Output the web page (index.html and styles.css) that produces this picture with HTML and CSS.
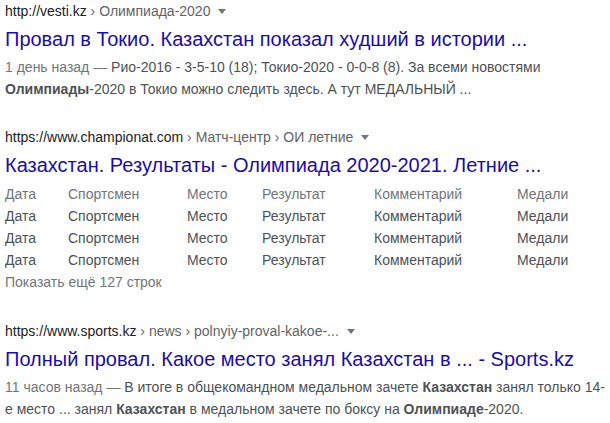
FILE: index.html
```html
<!DOCTYPE html>
<html lang="ru">
<head>
<meta charset="utf-8">
<link rel="stylesheet" href="styles.css">
</head>
<body>
<div class="results">
  <div class="result">
    <div class="cite"><span class="domain">http://vesti.kz</span><span class="path"> › Олимпиада-2020</span><span class="caret"></span></div>
    <h3 class="title">Провал в Токио. Казахстан показал худший в истории ...</h3>
    <div class="snippet"><span class="date">1 день назад — </span>Рио-2016 - 3-5-10 (18); Токио-2020 - 0-0-8 (8). За всеми новостями<br><b>Олимпиады</b>-2020 в Токио можно следить здесь. А тут МЕДАЛЬНЫЙ ...</div>
  </div>

  <div class="result">
    <div class="cite"><span class="domain">https://www.championat.com</span><span class="path"> › Матч-центр › ОИ летние</span><span class="caret"></span></div>
    <h3 class="title">Казахстан. Результаты - Олимпиада 2020-2021. Летние ...</h3>
    <div class="table">
      <div class="row head"><span>Дата</span><span>Спортсмен</span><span>Место</span><span>Результат</span><span>Комментарий</span><span>Медали</span></div>
      <div class="row"><span>Дата</span><span>Спортсмен</span><span>Место</span><span>Результат</span><span>Комментарий</span><span>Медали</span></div>
      <div class="row"><span>Дата</span><span>Спортсмен</span><span>Место</span><span>Результат</span><span>Комментарий</span><span>Медали</span></div>
      <div class="row"><span>Дата</span><span>Спортсмен</span><span>Место</span><span>Результат</span><span>Комментарий</span><span>Медали</span></div>
      <div class="more">Показать ещё 127 строк</div>
    </div>
  </div>

  <div class="result">
    <div class="cite"><span class="domain">https://www.sports.kz</span><span class="path"> › news › polnyiy-proval-kakoe-...</span><span class="caret"></span></div>
    <h3 class="title">Полный провал. Какое место занял Казахстан в ... - Sports.kz</h3>
    <div class="snippet"><span class="date">11 часов назад — </span>В итоге в общекомандном медальном зачете <b>Казахстан</b> занял только 14-<br>е место ... занял <b>Казахстан</b> в медальном зачете по боксу на <b>Олимпиаде</b>-2020.</div>
  </div>
</div>
</body>
</html>
```

FILE: styles.css
```css
html, body {
  margin: 0;
  padding: 0;
  background: #ffffff;
}

body {
  font-family: Arial, "Liberation Sans", sans-serif;
  font-size: 14px;
  color: #4d5156;
}

.results {
  padding: 2px 0 0 5px;
  display: flex;
  flex-direction: column;
  gap: 28px;
}

.cite {
  font-size: 14px;
  line-height: 18px;
  white-space: nowrap;
}

.domain {
  color: #202124;
}

.path {
  color: #5f6368;
}

.caret {
  display: inline-block;
  width: 0;
  height: 0;
  border-left: 4px solid transparent;
  border-right: 4px solid transparent;
  border-top: 5px solid #70757a;
  margin-left: 8px;
  vertical-align: middle;
  position: relative;
  top: -1px;
}

.title {
  margin: 0;
  padding-top: 6px;
  font-size: 20px;
  font-weight: normal;
  line-height: 26px;
  color: #1a0dab;
  white-space: nowrap;
}

.snippet {
  margin-top: 4px;
  line-height: 22px;
  color: #4d5156;
  white-space: nowrap;
}

.snippet b {
  color: #4d5156;
  font-weight: bold;
}

.date {
  color: #70757a;
}

.table {
  margin-top: 5px;
  margin-bottom: 1px;
  display: flex;
  flex-direction: column;
}

.row {
  display: grid;
  grid-template-columns: 63px 119px 75px 112px 143px auto;
  line-height: 22px;
  color: #4d5156;
  white-space: nowrap;
}

.row.head {
  color: #70757a;
}

.more {
  line-height: 22px;
  color: #70757a;
}
```
